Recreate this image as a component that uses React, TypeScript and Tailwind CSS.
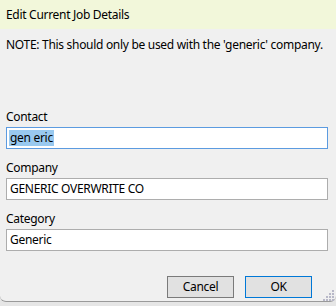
import React from 'react';

const font = { fontFamily: '"Segoe UI", "Noto Sans", "Open Sans", sans-serif' };

function Field({ label, value, focused }: { label: string; value: string; focused?: boolean }) {
  return (
    <div className="flex flex-col">
      <div className="h-[16px] text-[12px] leading-[16px] text-black">{label}</div>
      <div
        className={`mt-[2px] flex h-[22px] w-[322px] items-center bg-white px-[2px] text-[12px] text-black border ${
          focused ? 'border-[#5c9be0]' : 'border-[#adadad]'
        }`}
      >
        {focused ? (
          <span className="bg-[#99c9ef] px-[1px] leading-[16px]">{value}</span>
        ) : (
          <span className="px-[1px] leading-[16px]">{value}</span>
        )}
      </div>
    </div>
  );
}

function ResizeGrip() {
  const dots: [number, number][] = [
    [9, 0],
    [6, 3], [9, 3],
    [3, 6], [6, 6], [9, 6],
    [0, 9], [3, 9], [6, 9], [9, 9],
  ];
  return (
    <svg width="12" height="12" viewBox="0 0 12 12" className="absolute bottom-[4px] right-[1px]">
      {dots.map(([x, y], i) => (
        <rect key={i} x={x} y={y} width="2" height="2" fill="#b8b8c8" />
      ))}
    </svg>
  );
}

export default function App() {
  return (
    <div className="relative flex h-[306px] w-[336px] flex-col overflow-hidden bg-[#e6e6e6] tracking-[-0.3px]" style={font}>
      <div className="flex h-[302px] flex-col rounded-b-[6px] border-b border-[#9a9a9a] bg-[#f0f0f0]">
        {/* Title band */}
        <div className="flex h-[29px] items-center bg-[#f2f7da] pl-[6px] text-[12px] leading-[16px] text-black">
          Edit Current Job Details
        </div>

        {/* Note */}
        <div className="mt-[8px] whitespace-nowrap pl-[6px] text-[12px] leading-[16px] text-black">
          NOTE: This should only be used with the 'generic' company.
        </div>

        {/* Fields */}
        <div className="mt-[56px] flex flex-col gap-[11px] pl-[6px]">
          <Field label="Contact" value="gen eric" focused />
          <Field label="Company" value="GENERIC OVERWRITE CO" />
          <Field label="Category" value="Generic" />
        </div>

        {/* Buttons */}
        <div className="mt-[25px] flex gap-[11px] pl-[167px]">
          <button className="flex h-[22px] w-[67px] items-center justify-center border border-[#7a7a7a] bg-[#e1e1e1] text-[12px] text-black">
            Cancel
          </button>
          <button className="flex h-[22px] w-[67px] items-center justify-center border border-[#0078d7] bg-[#e1e1e1] text-[12px] text-black">
            OK
          </button>
        </div>
      </div>
      <ResizeGrip />
    </div>
  );
}
